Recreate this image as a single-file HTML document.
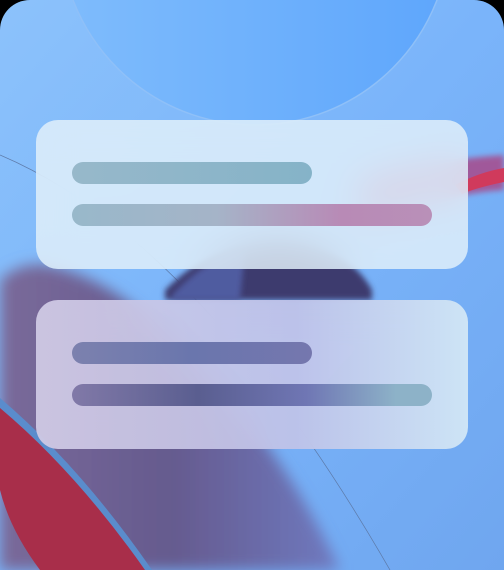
<!DOCTYPE html>
<html><head><style>
html,body{margin:0;padding:0;background:#000;}
.wrap{position:relative;width:504px;height:570px;overflow:hidden;border-radius:30px 30px 0 0;background:#000;}
svg{position:absolute;left:0;top:0;}
.card{position:absolute;left:36px;width:432px;height:149px;border-radius:22px;backdrop-filter:blur(18px);-webkit-backdrop-filter:blur(18px);}
.bar{position:absolute;left:36px;height:22px;border-radius:11px;}
</style></head><body>
<div class="wrap">
<svg width="504" height="570" viewBox="0 0 504 570">
<defs>
<linearGradient id="bg" x1="0" y1="0" x2="1" y2="1"><stop offset="0" stop-color="#8cc2fb"/><stop offset="0.5" stop-color="#7ab4fa"/><stop offset="1" stop-color="#6fa6ef"/></linearGradient>
<linearGradient id="circ" x1="0" y1="0" x2="1" y2="0"><stop offset="0" stop-color="#7fbcfc"/><stop offset="1" stop-color="#5ea6fc"/></linearGradient>
<linearGradient id="pur" x1="0" y1="0" x2="1" y2="0"><stop offset="0" stop-color="#7a6a9a"/><stop offset="0.5" stop-color="#655a8e"/><stop offset="1" stop-color="#6f7ac0"/></linearGradient>
<filter id="b4"><feGaussianBlur stdDeviation="3"/></filter>
<filter id="b8"><feGaussianBlur stdDeviation="7"/></filter>
</defs>
<rect width="504" height="570" fill="url(#bg)"/>
<circle cx="255" cy="-70" r="195" fill="url(#circ)" stroke="#8fc0f8" stroke-width="1.5"/>
<path d="M0 155 Q200 240 390 570" fill="none" stroke="#5d7aa8" stroke-width="0.7"/>
<path d="M0 280 Q20 262 45 265 Q100 275 150 320 Q270 420 340 570 L0 570Z" fill="url(#pur)" filter="url(#b8)"/>
<path d="M0 402 Q80 470 150 570 L40 570 Q10 530 0 490Z" fill="#a82e4a"/>
<path d="M0 398 Q80 466 152 570 L145 570 Q76 472 0 408Z" fill="#5a8ccc"/>
<path d="M165 290 Q220 235 290 240 Q350 250 372 290 L372 300 L165 300Z" fill="#3d3a6e" filter="url(#b4)"/>
<path d="M172 295 Q210 255 245 250 L240 300 L172 300Z" fill="#4f5ba0" filter="url(#b4)"/>
<path d="M360 180 Q430 160 504 155 L504 190 Q460 192 360 220Z" fill="#a0599a" filter="url(#b4)"/>
<path d="M455 185 Q480 172 504 168 L504 182 Q475 188 462 194Z" fill="#d03a5c"/>
</svg>
<div class="card" style="top:120px;background:rgba(228,242,250,0.82);">
  <div class="bar" style="top:42px;width:240px;background:linear-gradient(90deg,#97b8ca,#85b3c8);"></div>
  <div class="bar" style="top:84px;width:360px;background:linear-gradient(90deg,#98b8ca,#a5b4c8 40%,#b88ab6 75%,#b990b8);"></div>
</div>
<div class="card" style="top:300px;background:linear-gradient(90deg,rgba(212,206,232,0.9),rgba(195,196,232,0.9) 60%,rgba(215,234,246,0.9));">
  <div class="bar" style="top:42px;width:240px;background:linear-gradient(90deg,#7c81ae,#6a76ad 50%,#7577ae);"></div>
  <div class="bar" style="top:84px;width:360px;background:linear-gradient(90deg,#8179a8,#5a5e90 35%,#6f76b4 65%,#8db2c8 90%);"></div>
</div>
</div>
</body></html>
